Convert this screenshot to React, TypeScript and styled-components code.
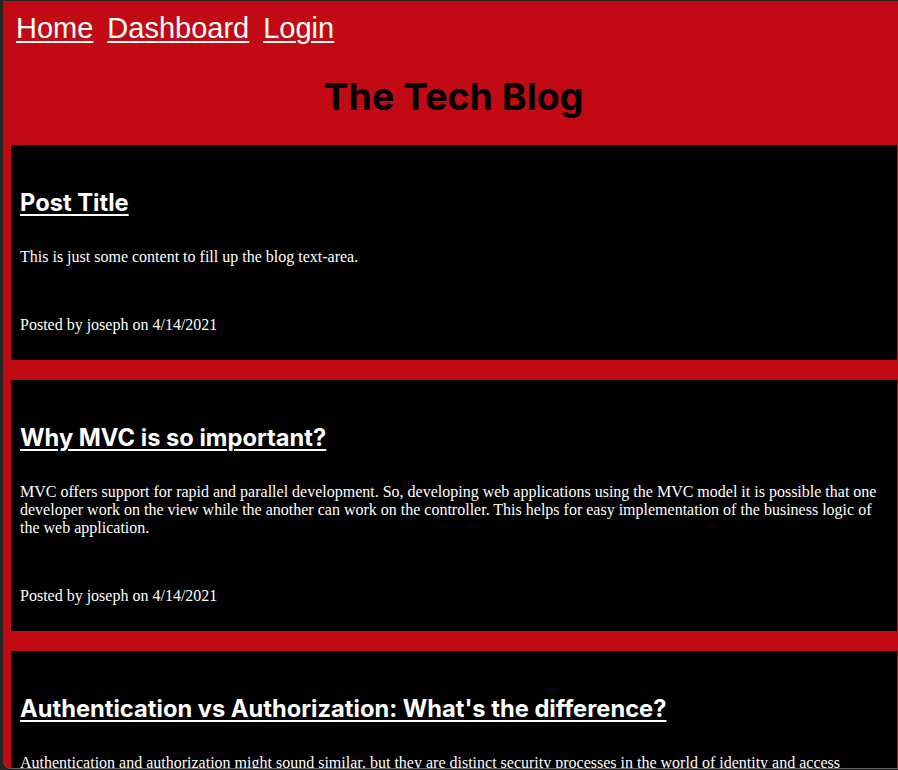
import React from 'react';
import styled, { createGlobalStyle } from 'styled-components';

const GlobalStyle = createGlobalStyle`
  html, body {
    margin: 0;
    padding: 0;
    background: #262626;
  }
  body {
    padding: 1px 0 0 3px;
  }
`;

const posts = [
  {
    title: 'Post Title',
    content: 'This is just some content to fill up the blog text-area.',
    author: 'joseph',
    date: '4/14/2021',
  },
  {
    title: 'Why MVC is so important?',
    content:
      'MVC offers support for rapid and parallel development. So, developing web applications using the MVC model it is possible that one developer work on the view while the another can work on the controller. This helps for easy implementation of the business logic of the web application.',
    author: 'joseph',
    date: '4/14/2021',
  },
  {
    title: "Authentication vs Authorization: What's the difference?",
    content:
      'Authentication and authorization might sound similar, but they are distinct security processes in the world of identity and access management. Authentication confirms that users are who they say they are. Authorization gives those users permission to access a resource.',
    author: 'joseph',
    date: '4/14/2021',
  },
];

function App() {
  return (
    <>
      <GlobalStyle />
      <Page>
        <Header>
          <Nav>
            <NavLink href="#">Home</NavLink>
            <NavLink href="#">Dashboard</NavLink>
            <NavLink href="#">Login</NavLink>
          </Nav>
          <SiteTitle>The Tech Blog</SiteTitle>
        </Header>
        <Posts>
          {posts.map((post) => (
            <PostCard key={post.title}>
              <PostTitle href="#">{post.title}</PostTitle>
              <PostContent>{post.content}</PostContent>
              <PostMeta>
                Posted by {post.author} on {post.date}
              </PostMeta>
            </PostCard>
          ))}
        </Posts>
      </Page>
    </>
  );
}

const Page = styled.div`
  background: #c20a14;
  height: 767px;
  overflow: hidden;
  border-bottom: 1px solid #5c5c5c;
  border-bottom-left-radius: 8px;
`;

const Header = styled.header`
  display: flex;
  flex-direction: column;
  padding: 11px 0 0 13px;
`;

const Nav = styled.nav`
  display: flex;
  gap: 14px;
`;

const NavLink = styled.a`
  font-family: 'Liberation Sans', Arial, sans-serif;
  font-size: 29px;
  color: #fff;
  text-decoration: underline;
  text-underline-offset: 3px;
  text-decoration-thickness: 2px;
`;

const SiteTitle = styled.h1`
  margin: 30px 0 26px -7px;
  text-align: center;
  font-family: Inter, 'Noto Sans', sans-serif;
  font-weight: 700;
  font-size: 37.5px;
  line-height: 44px;
  color: #000;
`;

const Posts = styled.main`
  display: flex;
  flex-direction: column;
  gap: 20px;
  margin: 0 1px 0 8px;
`;

const PostCard = styled.article`
  display: flex;
  flex-direction: column;
  align-items: flex-start;
  background: #000;
  padding: 43px 9px 26px;
`;

const PostTitle = styled.a`
  font-family: Inter, 'Noto Sans', sans-serif;
  font-weight: 700;
  font-size: 23.7px;
  line-height: 29px;
  color: #fff;
  text-decoration: underline;
  text-underline-offset: 3px;
  text-decoration-thickness: 2px;
`;

const PostContent = styled.p`
  margin: 31px 0 0;
  font-family: 'Liberation Serif', 'Times New Roman', serif;
  font-size: 16px;
  line-height: 18px;
  color: #fff;
`;

const PostMeta = styled.p`
  margin: 50px 0 0;
  font-family: 'Liberation Serif', 'Times New Roman', serif;
  font-size: 16px;
  line-height: 18.2px;
  color: #fff;
`;

export default App;
